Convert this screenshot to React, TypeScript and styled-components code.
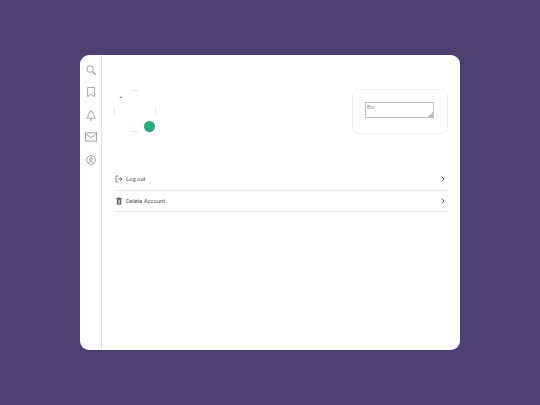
import React from "react";
import styled, { createGlobalStyle } from "styled-components";
import { ChevronRight, LogOut } from "lucide-react";

const Global = createGlobalStyle`
  html, body { margin: 0; padding: 0; height: 100%; background: #4e4070; }
  #root { height: 100%; }
`;
const Page = styled.div`
  width: 540px; height: 405px; display: flex; align-items: center; justify-content: center;
  background: #4e4070; font-family: Roboto, "Liberation Sans", sans-serif;
`;
const Card = styled.div`
  width: 380px; height: 295px; background: #fff; border-radius: 9px; display: flex; overflow: hidden;
`;
const Sidebar = styled.nav`
  width: 21px; flex: none; border-right: 1px solid #e3e3e6; display: flex; flex-direction: column;
  align-items: center; padding-top: 8.5px; gap: 10.5px;
`;
const NavIcon = styled.svg<{ $wide?: boolean }>`
  width: ${(p) => (p.$wide ? 14 : 12)}px; height: 12px; fill: none; stroke: #a3a3a6; stroke-width: 1.3; display: block; flex: none;
`;
const Main = styled.main`
  flex: 1; padding: 34px 12px 0 12px; display: flex; flex-direction: column;
`;
const Top = styled.div`
  display: flex; justify-content: space-between; align-items: flex-start; height: 80px;
`;
const Avatar = styled.div`
  position: relative; width: 44px; height: 44px;
`;
const Ring = styled.svg`
  width: 44px; height: 44px; display: block;
`;
const Dot = styled.span`
  position: absolute; left: 30px; top: 31.5px; width: 11px; height: 11px; border-radius: 50%; background: #25ab78;
`;
const BrokenMark = styled.span`
  position: absolute; left: 5px; top: 7px; width: 0; height: 0;
  border-left: 3px solid transparent; border-bottom: 2px solid #8d8d93;
`;
const BioCard = styled.div`
  width: 96px; height: 45px; border: 1px solid #f1f1f3; border-radius: 7px; padding: 12px 12px 0;
  box-sizing: border-box;
`;
const Bio = styled.textarea`
  width: 69px; height: 16px; display: block; box-sizing: border-box; padding: 1px; margin: 0;
  border: 1px solid #c2c2c2; font: 5px Roboto, sans-serif; color: #777; background: #fff; border-radius: 0; outline: none;
  &::placeholder { color: #8a8a8a; }
  &::-webkit-resizer {
    background: linear-gradient(135deg, transparent 50%, #bdbdbd 50%) no-repeat right bottom / 5px 5px;
  }
`;
const List = styled.div`
  display: flex; flex-direction: column;
`;
const Row = styled.div`
  height: 21.5px; box-sizing: border-box; display: flex; align-items: center; border-bottom: 1px solid #ededef;
  font-size: 5.8px; gap: 3px; padding: 0 1px 0 1px;
`;
const RowLabel = styled.span`
  flex: 1; color: #555;
`;
const TrashIcon = styled.svg`
  width: 8px; height: 8px; display: block; flex: none;
`;

export default function App() {
  return (
    <Page>
      <Global />
      <Card>
        <Sidebar>
          <NavIcon viewBox="0 0 16 16"><circle cx="6.8" cy="6.8" r="4.3" /><path d="M10 10l4.2 4.2" strokeWidth="1.7" /></NavIcon>
          <NavIcon viewBox="0 0 16 16"><path d="M3.5 2h9v12L8 11l-4.5 3z" /></NavIcon>
          <NavIcon viewBox="0 0 16 16"><path d="M2.4 12.4c1.4-1 1.8-2.3 1.8-4.6C4.2 5.4 5.8 3.6 8 3.6s3.8 1.8 3.8 4.2c0 2.3.4 3.6 1.8 4.6zM8 1.4v2.2M6.6 14.4c.4.6 2.4.6 2.8 0" /></NavIcon>
          <NavIcon $wide viewBox="0 0 18.7 16"><rect x="2" y="2.5" width="14.7" height="11" /><path d="M2 3.5l7.35 5.5 7.35-5.5" /></NavIcon>
          <NavIcon viewBox="0 0 16 16"><circle cx="8" cy="8" r="5.8" /><circle cx="8" cy="6.8" r="1.9" /><path d="M4.6 12.4c.8-1.6 2-2.2 3.4-2.2s2.6.6 3.4 2.2" /></NavIcon>
        </Sidebar>
        <Main>
          <Top>
            <Avatar>
              <Ring viewBox="0 0 44 44" fill="none">
                <g stroke="#e8e8ea" strokeWidth="1">
                  <path d="M17 1.5h7" />
                  <path d="M17 42.5h7" />
                  <path d="M0.5 18v8" />
                  <path d="M41.5 18v8" />
                </g>
              </Ring>
              <BrokenMark />
              <Dot />
            </Avatar>
            <BioCard>
              <Bio placeholder="Bio" />
            </BioCard>
          </Top>
          <List>
            <Row>
              <LogOut size={8} strokeWidth={2} color="#444" />
              <RowLabel>Log out</RowLabel>
              <ChevronRight size={8} strokeWidth={2.6} color="#444" />
            </Row>
            <Row>
              <TrashIcon viewBox="0 0 8 8">
                <path d="M1 1h6v.8H1zM3 .4h2v.6H3zM1.8 2.2h4.4V7.6H1.8z" fill="#444" />
                <path d="M2.7 3h2.6v3.8H2.7z" fill="#bbb" />
              </TrashIcon>
              <RowLabel>Delete Account</RowLabel>
              <ChevronRight size={8} strokeWidth={2.6} color="#444" />
            </Row>
          </List>
        </Main>
      </Card>
    </Page>
  );
}
